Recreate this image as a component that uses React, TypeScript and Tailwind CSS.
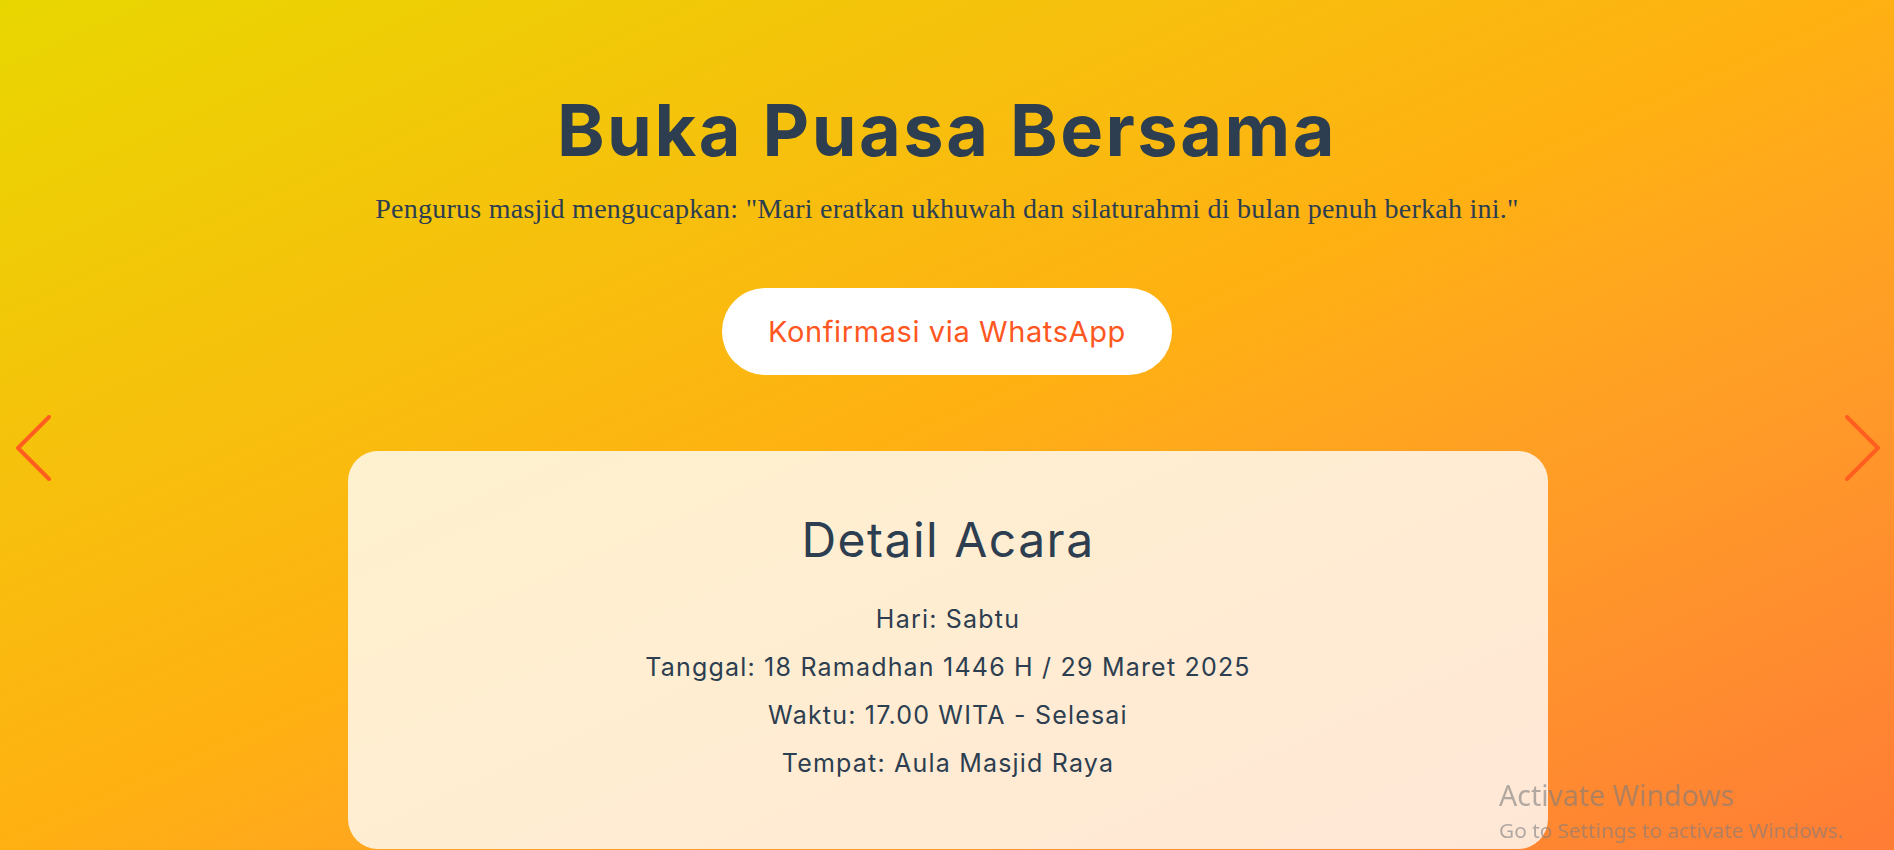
import React from "react";

const sans = { fontFamily: "Inter, 'Open Sans', sans-serif" };

const Chevron: React.FC<{ dir: "left" | "right" }> = ({ dir }) => (
    <svg width="36" height="66" viewBox="0 0 36 66" fill="none">
        <path
            d={dir === "left" ? "M33 2 L2 33 L33 64" : "M3 2 L34 33 L3 64"}
            stroke="#ff5e1f"
            strokeWidth="4"
            strokeLinecap="round"
            strokeLinejoin="round"
        />
    </svg>
);

const details = [
    "Hari: Sabtu",
    "Tanggal: 18 Ramadhan 1446 H / 29 Maret 2025",
    "Waktu: 17.00 WITA - Selesai",
    "Tempat: Aula Masjid Raya",
];

const App: React.FC = () => {
    return (
        <div
            className="relative h-[850px] overflow-hidden bg-gradient-to-br from-[#e8d600] via-[#ffb012] to-[#ff7c35]"
            style={sans}
        >
            {/* carousel arrows */}
            <button className="absolute left-[16px] top-[415px]">
                <Chevron dir="left" />
            </button>
            <button className="absolute right-[14px] top-[415px]">
                <Chevron dir="right" />
            </button>

            <div className="flex flex-col items-center pt-[94px]">
                <h1 className="text-[72px] leading-none font-bold tracking-[2.5px] text-[#2c3e50]">Buka Puasa Bersama</h1>
                <p
                    className="mt-[23px] text-[28px] leading-[39px] tracking-[0.25px] text-[#2c3e50]"
                    style={{ fontFamily: "'Liberation Serif', 'DejaVu Serif', serif" }}
                >
                    Pengurus masjid mengucapkan: "Mari eratkan ukhuwah dan silaturahmi di bulan penuh berkah ini."
                </p>

                <button className="mt-[60px] flex h-[87px] w-[450px] items-center justify-center rounded-full bg-white text-[29px] tracking-[0.6px] text-[#ff5722]">
                    Konfirmasi via WhatsApp
                </button>

                <div className="mt-[76px] ml-[2px] w-[1200px] rounded-[30px] bg-white/80 px-10 pt-[60px] pb-[62px] text-center text-[#2c3e50]">
                    <h2 className="text-[48px] leading-[1.2] font-normal tracking-[1.5px]">Detail Acara</h2>
                    <div className="mt-[26px] flex flex-col">
                        {details.map((d) => (
                            <p key={d} className="text-[25px] leading-[48px] tracking-[1.2px]">
                                {d}
                            </p>
                        ))}
                    </div>
                </div>
            </div>

            {/* windows watermark */}
            <div
                className="pointer-events-none fixed left-[1499px] top-[778px] text-[#7d7d7d]/60"
                style={{ fontFamily: "'Noto Sans', 'Open Sans', sans-serif" }}
            >
                <div className="text-[28.5px] leading-[34px]">Activate Windows</div>
                <div className="text-[20.8px] leading-[36px]">Go to Settings to activate Windows.</div>
            </div>
        </div>
    );
};

export default App;
